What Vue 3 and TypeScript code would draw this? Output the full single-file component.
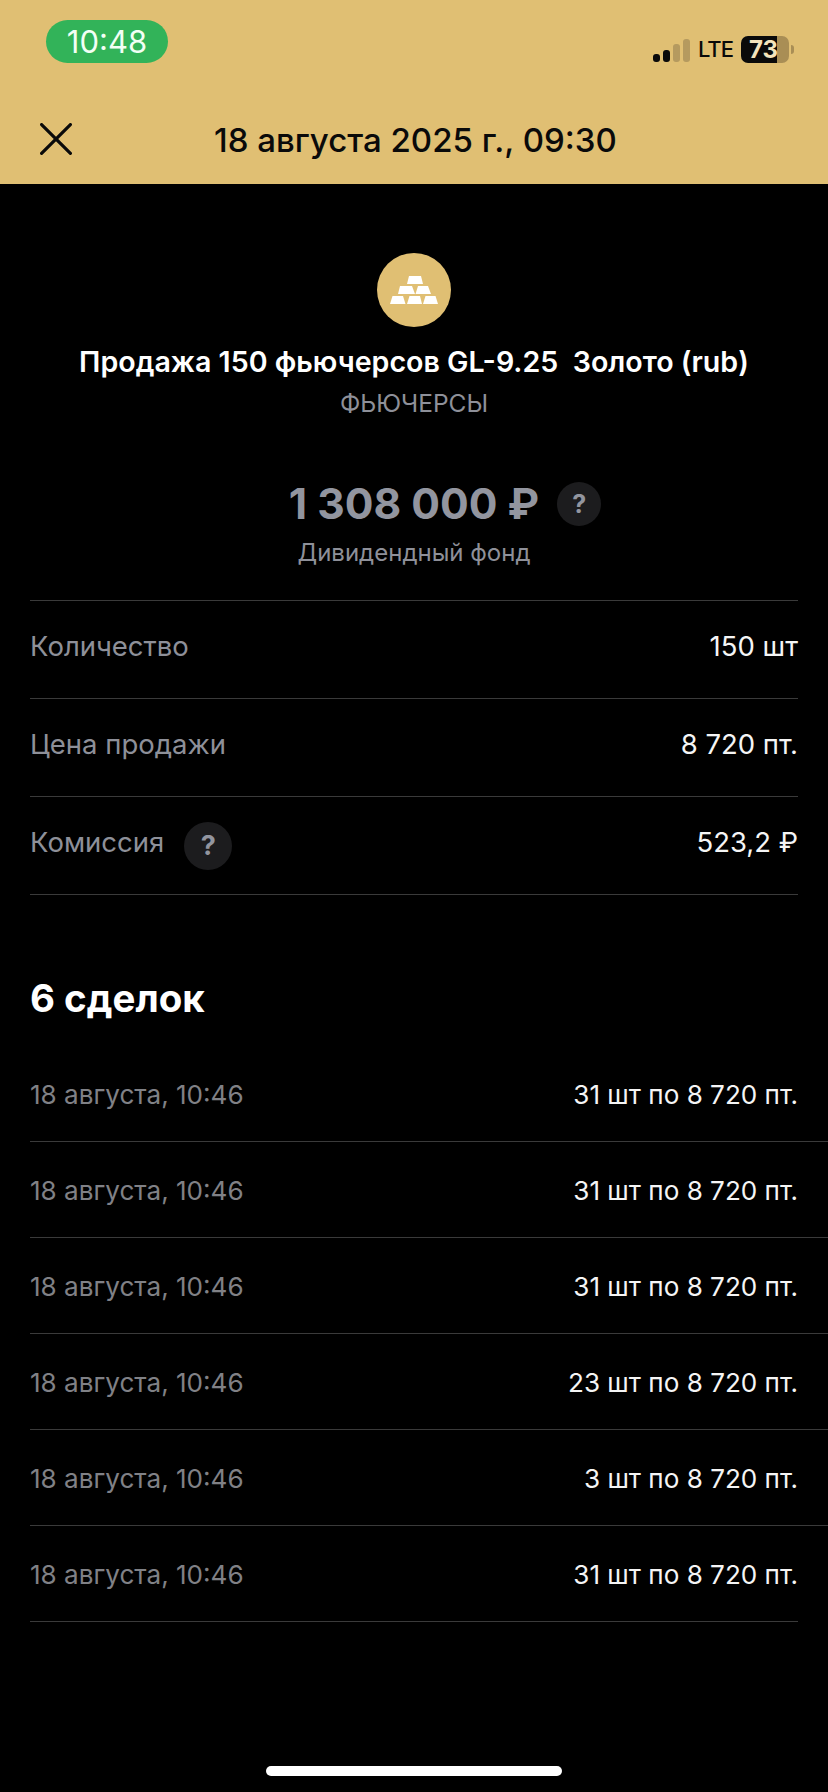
<script setup lang="ts">
const rows = [
  { label: 'Количество', value: '150 шт', help: false },
  { label: 'Цена продажи', value: '8 720 пт.', help: false },
  { label: 'Комиссия', value: '523,2 ₽', help: true },
]
const deals = ['31 шт', '31 шт', '31 шт', '23 шт', '3 шт', '31 шт']
</script>

<template>
  <div class="page">
    <header class="head">
      <div class="status">
        <div class="pill">10:48</div>
        <div class="indicators">
          <svg class="signal" width="37" height="24" viewBox="0 0 37 24">
            <rect x="0" y="15" width="7" height="8" rx="3" fill="#0a0a0a" />
            <rect x="10" y="11" width="7" height="12" rx="3" fill="#0a0a0a" />
            <rect x="20" y="5" width="7" height="18" rx="3" fill="#b59a5f" />
            <rect x="30" y="0" width="7" height="23" rx="3" fill="#b59a5f" />
          </svg>
          <span class="lte">LTE</span>
          <div class="battery">
            <div class="battery-body"><span>73</span></div>
            <div class="battery-tip"></div>
          </div>
        </div>
      </div>
      <div class="nav">
        <svg class="close" width="32" height="32" viewBox="0 0 32 32">
          <path d="M1.600 1.600 L30.400 30.400 M30.400 1.600 L1.600 30.400" stroke="#0a0a0a" stroke-width="3.200" stroke-linecap="round" fill="none" />
        </svg>
        <div class="nav-title">18 августа 2025 г., 09:30</div>
      </div>
    </header>

    <main class="body">
      <section class="hero">
        <div class="logo">
          <svg width="48" height="28" viewBox="0 0 48 28">
            <path d="M19 0 H31 L33 8 H17 Z" fill="#fff" />
            <path d="M10 10 H22 L25 18 H8 Z M28 10 H38 L41 18 H25.500 Z" fill="#fff" />
            <path d="M2.500 20 H13 L15.500 28 H0 Z M19.500 20 H30 L32 28 H17 Z M35.500 20 H45.500 L48 28 H33 Z" fill="#fff" />
          </svg>
        </div>
        <h1 class="title">Продажа 150 фьючерсов GL-9.25&nbsp; Золото (rub)</h1>
        <div class="kind">ФЬЮЧЕРСЫ</div>
        <div class="amount-line">
          <span class="amount">1 308 000 ₽</span>
          <span class="help big">?</span>
        </div>
        <div class="fund">Дивидендный фонд</div>
      </section>

      <section class="info">
        <div v-for="r in rows" :key="r.label" class="info-row">
          <div class="info-label">
            <span class="lifted">{{ r.label }}</span>
            <span v-if="r.help" class="help small">?</span>
          </div>
          <div class="info-value lifted">{{ r.value }}</div>
        </div>
      </section>

      <h2 class="deals-title">6 сделок</h2>
      <section class="deals">
        <div v-for="(d, i) in deals" :key="i" class="deal">
          <span class="deal-date">18 августа, 10:46</span>
          <span class="deal-value">{{ d }} по 8 720 пт.</span>
        </div>
      </section>
    </main>

    <div class="home-wrap"><div class="home"></div></div>
  </div>
</template>

<style scoped>
.page {
  width: 828px;
  height: 1792px;
  background: #000;
  display: flex;
  flex-direction: column;
  overflow: hidden;
  font-family: Inter, "Liberation Sans", sans-serif;
  color: #fff;
}
.head {
  height: 184px;
  flex: none;
  background: #e0bf73;
  padding: 20px 34px 0 46px;
  box-sizing: border-box;
}
.status {
  display: flex;
  justify-content: space-between;
  align-items: flex-start;
}
.pill {
  width: 122px;
  height: 43px;
  border-radius: 22px;
  background: #32b359;
  color: #f2fff5;
  font-size: 31px;
  line-height: 43px;
  text-align: center;
}
.indicators {
  display: flex;
  align-items: center;
  gap: 8px;
  margin-top: 16px;
  height: 27px;
}
.signal {
  margin-top: 2px;
}
.lte {
  color: #0a0a0a;
  font-size: 22px;
  font-weight: 500;
  letter-spacing: -1px;
  line-height: 27px;
}
.battery {
  display: flex;
  align-items: center;
  gap: 2px;
}
.battery-body {
  width: 48px;
  height: 27px;
  box-sizing: border-box;
  padding-right: 3px;
  border-radius: 7px;
  background: linear-gradient(90deg, #0a0a0a 0 75%, #a98e55 75% 100%);
  color: #f4e4bc;
  font-size: 24px;
  font-weight: 700;
  line-height: 27px;
  text-align: center;
}
.battery-tip {
  width: 3px;
  height: 9px;
  border-radius: 0 3px 3px 0;
  background: #a98e55;
}
.nav {
  display: flex;
  align-items: center;
  margin-top: 60px;
  margin-left: -6px;
  height: 32px;
}
.close {
  flex: none;
}
.nav-title {
  margin-left: 142px;
  padding-top: 2px;
  color: #0a0a0a;
  font-size: 33px;
  font-weight: 500;
  line-height: 34px;
  white-space: nowrap;
}
.body {
  flex: 1;
  padding: 69px 0 0 30px;
}
.hero {
  display: flex;
  flex-direction: column;
  align-items: center;
  padding-right: 30px;
}
.logo {
  width: 74px;
  height: 74px;
  border-radius: 50%;
  background: #e0bf73;
  display: flex;
  align-items: center;
  justify-content: center;
}
.title {
  margin: 17px 0 0;
  font-size: 28.600px;
  font-weight: 600;
  line-height: 36px;
  white-space: nowrap;
}
.kind {
  margin-top: 7px;
  color: #8e9099;
  font-size: 24.500px;
  line-height: 32px;
}
.amount-line {
  display: flex;
  align-items: center;
  gap: 18px;
  margin-top: 61px;
  margin-left: 62px;
  height: 48px;
}
.amount {
  color: #92959f;
  font-size: 42.600px;
  font-weight: 700;
  line-height: 48px;
}
.help {
  display: flex;
  align-items: center;
  justify-content: center;
  border-radius: 50%;
  background: #1c1c1e;
  color: #92959f;
  font-weight: 700;
}
.help.big {
  width: 44px;
  height: 44px;
  font-size: 25px;
}
.help.small {
  width: 48px;
  height: 48px;
  font-size: 27px;
}
.fund {
  margin-top: 9px;
  color: #8e9099;
  font-size: 24px;
  line-height: 32px;
}
.info {
  margin-top: 31px;
  margin-right: 30px;
  border-top: 1px solid #3a3a3a;
}
.info-row {
  height: 98px;
  box-sizing: border-box;
  display: flex;
  justify-content: space-between;
  align-items: center;
  border-bottom: 1px solid #3a3a3a;
}
.info-label {
  display: flex;
  align-items: center;
  gap: 20px;
  color: #8e9099;
  font-size: 27.500px;
}
.lifted {
  margin-bottom: 8px;
}
.info-value {
  font-size: 27.500px;
  color: #f5f5f5;
}
.deals-title {
  margin: 80px 0 0;
  font-size: 38.500px;
  font-weight: 700;
  line-height: 46px;
}
.deals {
  margin-top: 25px;
}
.deal {
  height: 96px;
  box-sizing: border-box;
  display: flex;
  justify-content: space-between;
  align-items: center;
  padding-top: 2px;
  padding-right: 30px;
  border-bottom: 1px solid #3a3a3a;
  font-size: 26.100px;
}
.deal:last-child {
  margin-right: 30px;
  padding-right: 0;
}
.deal-date {
  color: #808186;
}
.deal-value {
  color: #f5f5f5;
}
.home-wrap {
  position: absolute;
  left: 0;
  top: 1766px;
  width: 828px;
  display: flex;
  justify-content: center;
}
.home {
  width: 296px;
  height: 10px;
  border-radius: 5px;
  background: #fff;
}
</style>
